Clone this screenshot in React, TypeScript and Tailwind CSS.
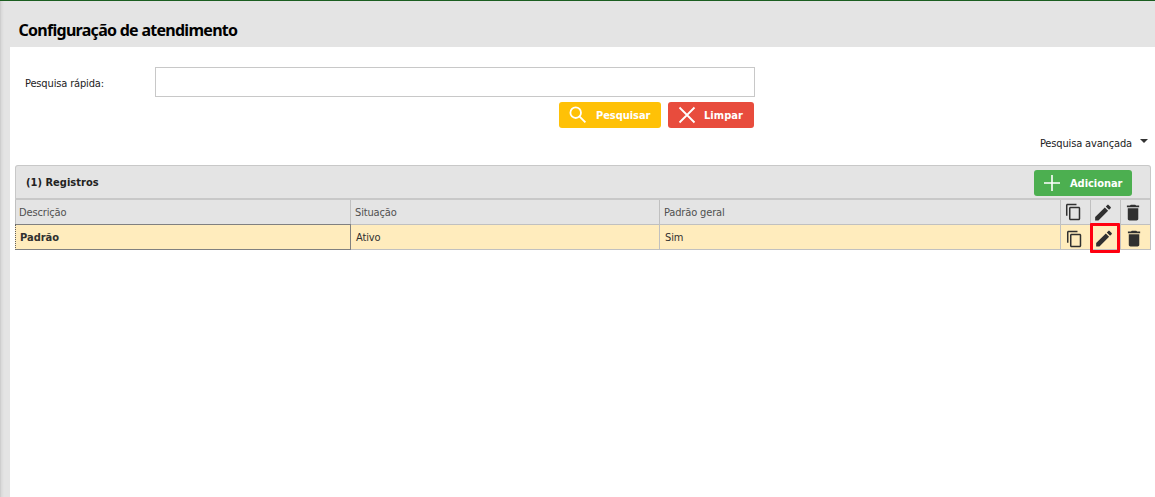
import React from "react";

const CopyIcon = () => (
  <svg className="h-[18px] w-[18px] shrink-0" viewBox="-0.650 0 24 24" fill="#303030">
    <path d="M16 1H4c-1.100 0-2 .9-2 2v14h2V3h12V1zm3 4H8c-1.100 0-2 .9-2 2v14c0 1.100.9 2 2 2h11c1.100 0 2-.9 2-2V7c0-1.100-.9-2-2-2zm0 16H8V7h11v14z" />
  </svg>
);

const EditIcon = () => (
  <svg className="h-[21px] w-[21px] shrink-0" viewBox="-0.600 0 24 24" fill="#303030">
    <path d="M3 17.250V21h3.750L17.810 9.940l-3.750-3.750L3 17.250zM20.710 7.040a.996.996 0 0 0 0-1.410l-2.340-2.340a.996.996 0 0 0-1.410 0l-1.830 1.830 3.750 3.750 1.830-1.830z" />
  </svg>
);

const TrashIcon = () => (
  <svg className="h-[21px] w-[21px] shrink-0" viewBox="-0.600 0 24 24" fill="#303030">
    <path d="M6 19c0 1.100.9 2 2 2h8c1.100 0 2-.9 2-2V7H6v12zM19 4h-3.500l-1-1h-5l-1 1H5v2h14V4z" />
  </svg>
);

export default function App() {
  return (
    <div className="flex h-[497px] w-[1155px] flex-col overflow-hidden border-t border-[#1b5e20] bg-[#e4e4e4] font-['DejaVu_Sans_Condensed','DejaVu_Sans',sans-serif] text-[11px] leading-[14px] text-[#222] [font-stretch:condensed]">
      <div className="flex min-h-0 flex-1 border-l border-[#cecece]">
        <div className="w-[3px] shrink-0 bg-gradient-to-r from-[#d8d8d8] to-[#e4e4e4]" />
        <div className="flex min-w-0 flex-1 flex-col pl-[6px]">
          <h1 className="h-[46px] shrink-0 whitespace-nowrap pl-[8.500px] pt-[19px] font-['Noto_Sans',sans-serif] text-[16px] font-bold leading-[20px] tracking-[-0.72px] text-black">
            Configuração de atendimento
          </h1>
          <main className="flex flex-1 flex-col bg-white pl-[5px] pr-[4px] pt-[20px]">
            <div className="flex h-[30px] items-center">
              <label className="w-[140px] shrink-0 pl-[10px] pt-[3px] tracking-[-0.15px]">Pesquisa rápida:</label>
              <input className="h-[30px] w-[600px] border border-[#c8c8c8] bg-white outline-none" />
            </div>
            <div className="mt-[5px] flex h-[26px] w-[739px] justify-end gap-[7px] font-bold text-white">
              <button className="flex w-[102px] items-center rounded-[3px] bg-[#ffc107] pl-[10px]">
                <svg className="h-[18px] w-[18px] shrink-0" viewBox="0 0 18 18" fill="none" stroke="white" strokeWidth="1.800">
                  <circle cx="6.700" cy="6.700" r="5.300" />
                  <path d="M10.400 10.400l6 6" />
                </svg>
                <span className="ml-[9px] pt-px tracking-[-0.05px]">Pesquisar</span>
              </button>
              <button className="flex w-[86px] items-center rounded-[3px] bg-[#e84c3d] pl-[10px]">
                <svg className="h-[18px] w-[18px] shrink-0" viewBox="0 0 18 18" fill="none" stroke="white" strokeWidth="1.800">
                  <path d="M1.500 1.500l15 15M16.500 1.500l-15 15" />
                </svg>
                <span className="ml-[8px] pt-px tracking-[0.05px]">Limpar</span>
              </button>
            </div>
            <div className="mt-[8px] flex h-[14px] items-center justify-end pr-[3px]">
              <span className="pt-[2px] tracking-[-0.15px]">Pesquisa avançada</span>
              <svg className="mb-[4px] ml-[8px] h-[4px] w-[8px]" viewBox="0 0 8 4" fill="#333">
                <path d="M0 0h8L4 4z" />
              </svg>
            </div>
            <section className="mt-[15px] w-[1136px]">
              <div className="flex h-[35px] items-center justify-between rounded-t-[3px] border border-b-2 border-[#c8c8c8] bg-[#e4e4e4] pl-[10px] pr-[18px]">
                <strong className="pt-px tracking-[0.02px]">(1) Registros</strong>
                <button className="mt-[2px] flex h-[26px] w-[98px] items-center rounded-[3px] bg-[#4caf50] pl-[10px] font-bold text-white">
                  <svg className="h-[16px] w-[16px] shrink-0" viewBox="0 0 16 16" fill="none" stroke="white" strokeWidth="1.600">
                    <path d="M8 0v16M0 8h16" />
                  </svg>
                  <span className="ml-[10px] pt-px tracking-[-0.05px]">Adicionar</span>
                </button>
              </div>
              <div className="grid h-[25px] grid-cols-[336px_309px_401px_30px_30px_30px] border-b border-[#c0c0c0] bg-[#e4e4e4] text-[#505050]">
                <div className="flex items-center border-x border-[#c0c0c0] pl-[3px] pt-px tracking-[-0.15px]">Descrição</div>
                <div className="flex items-center border-r border-[#c0c0c0] pl-[4px] pt-px tracking-[-0.15px]">Situação</div>
                <div className="flex items-center border-r border-[#c0c0c0] pl-[4px] pt-px tracking-[-0.15px]">Padrão geral</div>
                <div className="flex items-center border-r border-[#c0c0c0] pl-[3px]"><CopyIcon /></div>
                <div className="flex items-center border-r border-[#c0c0c0] pl-px"><EditIcon /></div>
                <div className="flex items-center border-r border-[#c0c0c0] pl-px"><TrashIcon /></div>
              </div>
              <div className="relative -mt-px grid h-[26px] grid-cols-[336px_309px_401px_30px_30px_30px] grid-rows-[26px] bg-[#ffecbd] text-[#303030]">
                <div className="flex items-center border border-[#808080] border-l-[#606060] pl-[4px] pt-[2px] font-bold [border-left-style:dotted]">Padrão</div>
                <div className="flex items-center border-y border-r border-[#c0c0c0] pl-[5px] pt-[2px] tracking-[-0.15px]">Ativo</div>
                <div className="flex items-center border-y border-r border-[#c0c0c0] pl-[5px] pt-[2px] tracking-[-0.15px]">Sim</div>
                <div className="flex items-center border-y border-r border-[#c0c0c0] pl-[4px] pt-[3px]"><CopyIcon /></div>
                <div className="flex items-center border-y border-r border-[#c0c0c0] pl-[2px] pt-[3px]"><EditIcon /></div>
                <div className="flex items-center border-y border-r border-[#c0c0c0] pl-[2px] pt-[3px]"><TrashIcon /></div>
                <div className="absolute left-[1075px] top-[-1px] h-[30px] w-[30px] rounded-[1px] border-[3px] border-[#ff0010]" />
              </div>
            </section>
          </main>
        </div>
      </div>
    </div>
  );
}
